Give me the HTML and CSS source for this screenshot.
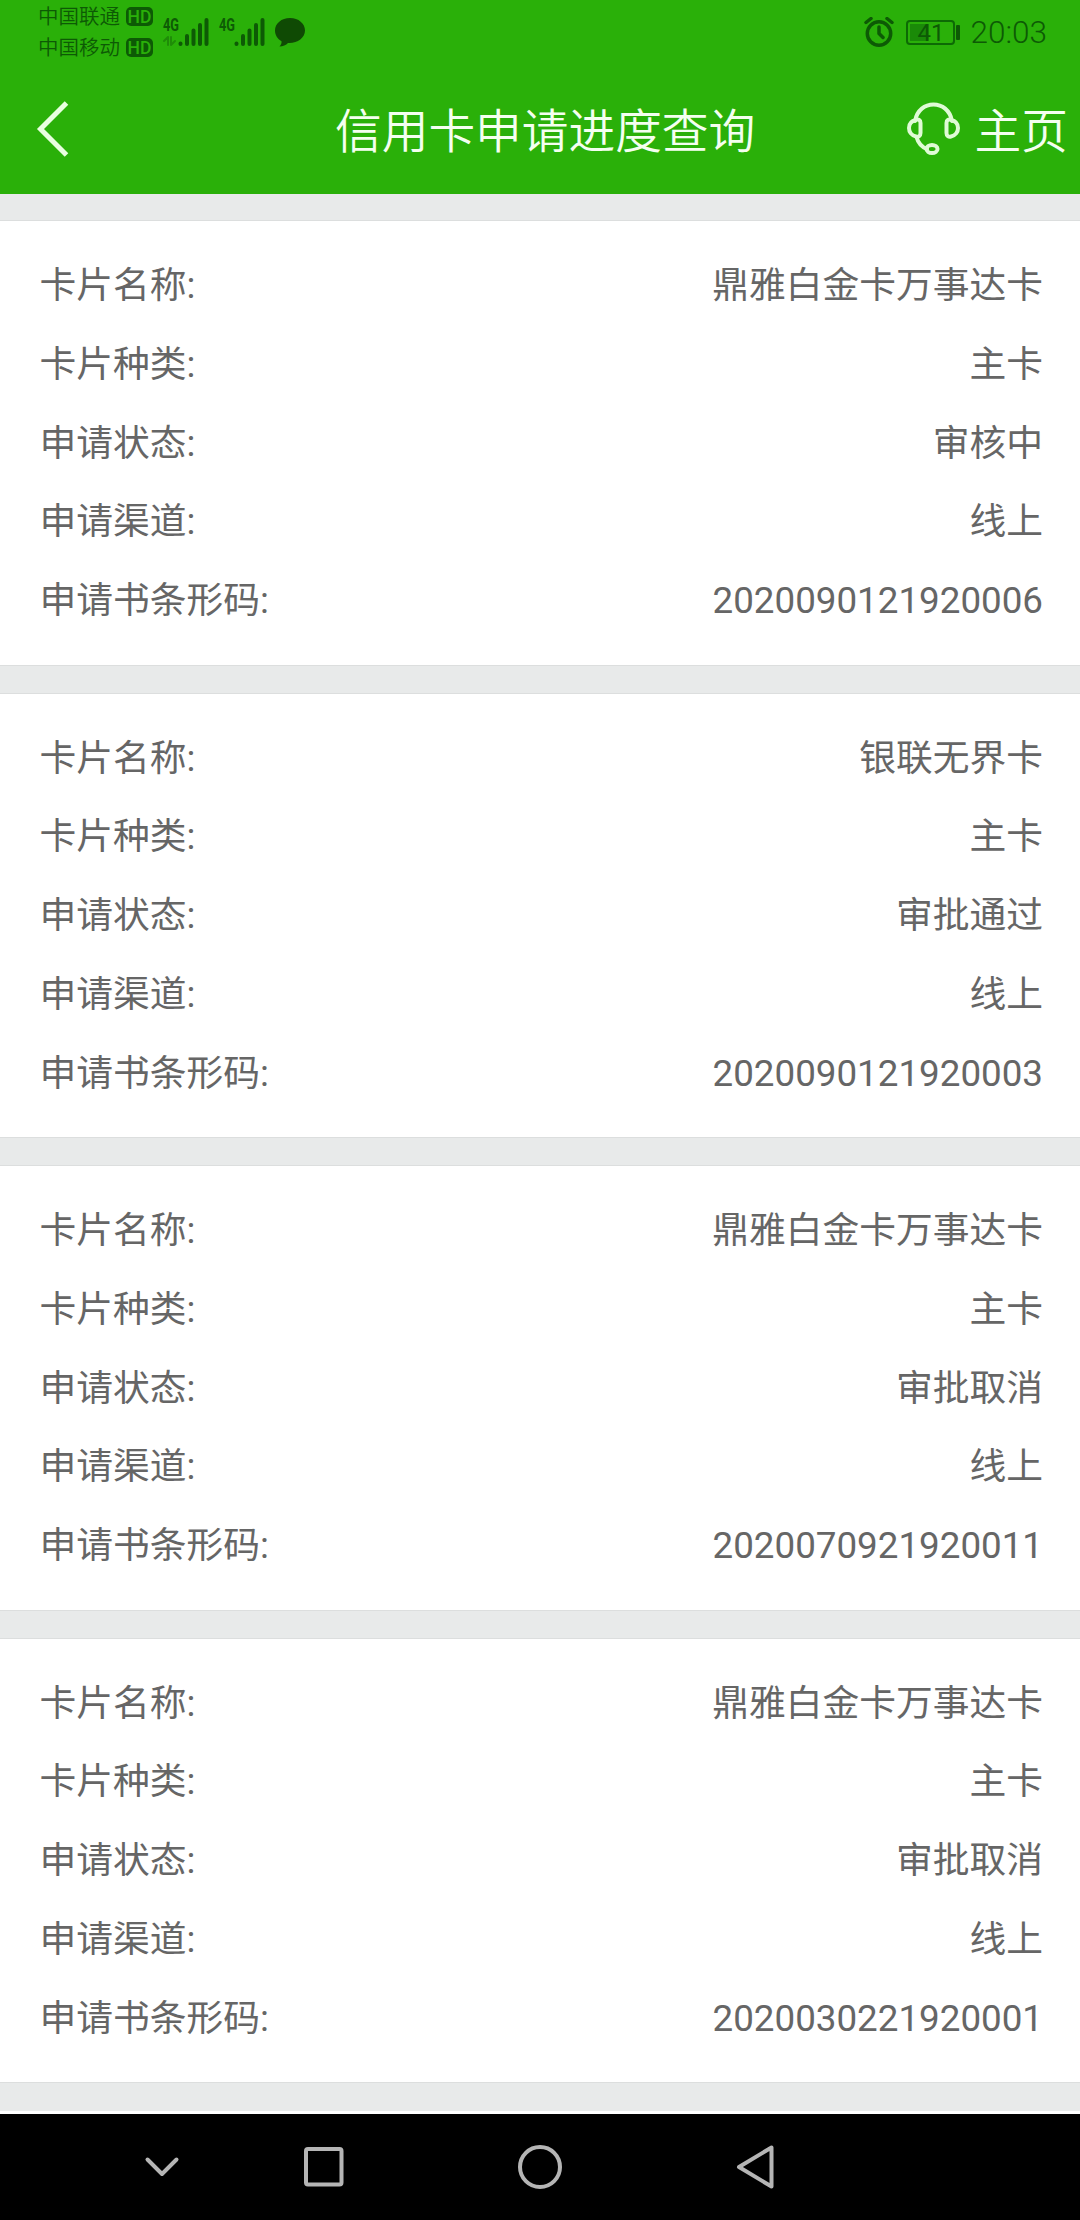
FILE: index.html
```html
<!DOCTYPE html>
<html lang="zh-CN">
<head>
  <meta charset="UTF-8" />
  <meta name="viewport" content="width=device-width, initial-scale=1.0"/>
  <title>信用卡申请进度查询</title>
  <link rel="stylesheet" href="styles.css">
</head>
<body>
  <header class="header">
    <div class="status-bar">
      <div class="carriers">
        <div class="carrier"><span class="carrier-name">中国联通</span><span class="hd">HD</span></div>
        <div class="carrier"><span class="carrier-name">中国移动</span><span class="hd">HD</span></div>
      </div>
      <svg class="signal" width="48" height="42" viewBox="-1 -6 48 42">
        <text x="0" y="14" textLength="16" lengthAdjust="spacingAndGlyphs">4G</text>
        <path class="faint" d="M1 24l4-4v8M8 20v8l4-4" />
        <path class="bars" d="M17.500 27v-.5M24 27v-8M30.500 27V13.500M37 27V8M43.500 27V3" />
      </svg>
      <svg class="signal" width="48" height="42" viewBox="-1 -6 48 42">
        <text x="0" y="14" textLength="16" lengthAdjust="spacingAndGlyphs">4G</text>
        <path class="bars" d="M17.500 27v-.5M24 27v-8M30.500 27V13.500M37 27V8M43.500 27V3" />
      </svg>
      <svg class="bubble" width="30" height="29" viewBox="0 0 30 29">
        <path d="M15 0C6.500 0 0 5.500 0 12.500c0 4.500 2.500 8.500 6.500 10.700.3 2-.5 3.800-2 5.300 3.500-.2 6.500-1.500 8.500-3.600C22 25.500 30 20 30 12.500 30 5.500 23.500 0 15 0z" />
      </svg>
      <svg class="alarm" width="30" height="30" viewBox="0 0 30 30">
        <circle cx="15" cy="16.500" r="11.700" />
        <path d="M2 5.500l5-4M28 5.500l-5-4M15 10v6.500l4 4" />
      </svg>
      <div class="battery">
        <div class="battery-body"><div class="battery-level"></div><span class="battery-text">41</span></div>
        <div class="battery-tip"></div>
      </div>
      <span class="clock">20:03</span>
    </div>
    <div class="title-bar">
      <svg class="back" width="34" height="56" viewBox="0 0 34 56">
        <path d="M30.500 2L4.500 28l26 26" />
      </svg>
      <h1 class="title">信用卡申请进度查询</h1>
      <svg class="service" width="54" height="54" viewBox="0 0 54 54">
        <path d="M8 19C10 8 18 2.500 26.500 2.500S43 8 45 19" />
        <path d="M9 18c2.500-1 4.500 0 4.500 3v10c0 3-2 4-4.500 3.500C4.500 33.500 2 30 2 26s2.500-7 7-8z" />
        <path d="M44 18c-2.500-1-4.500 0-4.500 3v10c0 3 2 4 4.500 3.500 4.500-1 7-4.500 7-8.500s-2.500-7-7-8z" />
        <path d="M9.500 35c1.500 5.500 5 10 10.500 12" />
        <ellipse cx="25" cy="47" rx="5.500" ry="4" />
      </svg>
      <span class="home">主页</span>
    </div>
  </header>

  <main class="list">
    <div class="card">
      <div class="row"><span>卡片名称:</span><span>鼎雅白金卡万事达卡</span></div>
      <div class="row"><span>卡片种类:</span><span>主卡</span></div>
      <div class="row"><span>申请状态:</span><span>审核中</span></div>
      <div class="row"><span>申请渠道:</span><span>线上</span></div>
      <div class="row"><span>申请书条形码:</span><span>2020090121920006</span></div>
    </div>
    <div class="card">
      <div class="row"><span>卡片名称:</span><span>银联无界卡</span></div>
      <div class="row"><span>卡片种类:</span><span>主卡</span></div>
      <div class="row"><span>申请状态:</span><span>审批通过</span></div>
      <div class="row"><span>申请渠道:</span><span>线上</span></div>
      <div class="row"><span>申请书条形码:</span><span>2020090121920003</span></div>
    </div>
    <div class="card">
      <div class="row"><span>卡片名称:</span><span>鼎雅白金卡万事达卡</span></div>
      <div class="row"><span>卡片种类:</span><span>主卡</span></div>
      <div class="row"><span>申请状态:</span><span>审批取消</span></div>
      <div class="row"><span>申请渠道:</span><span>线上</span></div>
      <div class="row"><span>申请书条形码:</span><span>2020070921920011</span></div>
    </div>
    <div class="card">
      <div class="row"><span>卡片名称:</span><span>鼎雅白金卡万事达卡</span></div>
      <div class="row"><span>卡片种类:</span><span>主卡</span></div>
      <div class="row"><span>申请状态:</span><span>审批取消</span></div>
      <div class="row"><span>申请渠道:</span><span>线上</span></div>
      <div class="row"><span>申请书条形码:</span><span>2020030221920001</span></div>
    </div>
  </main>

  <nav class="nav-bar">
    <svg class="nav-down" width="36" height="22" viewBox="0 0 36 22"><path d="M3.500 3.500L18 18 32.500 3.500" /></svg>
    <svg class="nav-recent" width="40" height="40" viewBox="0 0 40 40"><rect x="2" y="2" width="35.500" height="35.500" rx="2" /></svg>
    <svg class="nav-home" width="44" height="44" viewBox="0 0 44 44"><circle cx="22" cy="22" r="20" /></svg>
    <svg class="nav-back" width="40" height="44" viewBox="0 0 40 44"><path d="M35.500 2.500v39L3 22z" /></svg>
  </nav>
</body>
</html>
```

FILE: styles.css
```css
* {
  box-sizing: border-box;
}

body {
  margin: 0;
  height: 2220px;
  display: flex;
  flex-direction: column;
  font-family: Roboto, "Noto Sans CJK SC", sans-serif;
  background-color: #fff;
  color: #666;
  overflow: hidden;
}

svg {
  display: block;
  flex: none;
  fill: none;
  stroke-linecap: round;
  stroke-linejoin: round;
}

/* header */
.header {
  height: 194px;
  flex: none;
  background-color: #2ab009;
}

.status-bar {
  height: 64px;
  display: flex;
  align-items: center;
  padding: 0 33px 0 38px;
  color: #0d5a05;
}

.carriers {
  display: flex;
  flex-direction: column;
  margin-right: 9px;
}

.carrier {
  display: flex;
  align-items: center;
  gap: 6px;
  height: 31px;
  font-size: 20.500px;
  font-weight: 350;
}

.carrier-name {
  padding-bottom: 3px;
}

.hd {
  width: 27px;
  height: 19px;
  border-radius: 5px;
  background-color: #0d5a05;
  color: #2ab009;
  font-size: 17.500px;
  font-weight: 500;
  line-height: 20px;
  text-align: center;
}

.signal {
  margin-right: 8px;
}

.signal text {
  fill: #0d5a05;
  font-size: 18px;
  font-weight: 700;
}

.signal .bars {
  stroke: #0d5a05;
  stroke-width: 4;
}

.signal .faint {
  stroke: #1f8c08;
  stroke-width: 2;
}

.bubble {
  fill: #0f4a04;
  margin-left: 1px;
  margin-right: auto;
}

.alarm {
  stroke: #0d5a05;
  stroke-width: 3.500;
}

.battery {
  display: flex;
  align-items: center;
  margin: 0 10px 0 12px;
}

.battery-body {
  position: relative;
  width: 49px;
  height: 25px;
  border: 2px solid #0d6a05;
  border-radius: 4px;
  font-size: 24px;
  line-height: 23px;
  text-align: center;
}

.battery-level {
  position: absolute;
  left: 2px;
  top: 2px;
  width: 19px;
  height: 17px;
  background-color: #1a8a08;
}

.battery-text {
  position: relative;
}

.battery-tip {
  width: 4px;
  height: 15px;
  margin-left: 1px;
  border-radius: 1px;
  background-color: #0d5a05;
}

.clock {
  font-size: 31.500px;
  font-weight: 350;
}

.title-bar {
  height: 130px;
  display: flex;
  align-items: center;
  padding: 0 12px 0 36px;
  color: #f4fff0;
}

.back {
  stroke: #e9ffe0;
  stroke-width: 5;
  stroke-linecap: butt;
  stroke-linejoin: miter;
}

.title,
.home {
  padding-bottom: 3px;
  font-size: 46.700px;
  font-weight: 350;
}

.title {
  margin: 0 auto 0 265px;
}

.service {
  stroke: #e0fbd6;
  stroke-width: 4;
  margin-right: 14px;
}

/* cards */
.list {
  flex: 1;
  padding-top: 26px;
  background: linear-gradient(#e8eaea, #e8eaea) no-repeat 0 0 / 100% 1917px;
}

.card {
  height: 445.500px;
  margin-bottom: 27px;
  padding: 26px 37px 0 39.400px;
  background-color: #fff;
  border-top: 1px solid #dcdede;
  border-bottom: 1px solid #dcdede;
}

.row {
  display: flex;
  justify-content: space-between;
  font-size: 36.750px;
  line-height: 78.750px;
}

/* android navigation */
.nav-bar {
  height: 106px;
  flex: none;
  display: flex;
  align-items: center;
  padding: 0 0 0 144px;
  background-color: #000;
}

.nav-bar svg {
  stroke: #b5b5b5;
  stroke-width: 4;
}

.nav-recent {
  margin-left: 124px;
}

.nav-home {
  margin-left: 174px;
}

.nav-back {
  margin-left: 174px;
}
```
